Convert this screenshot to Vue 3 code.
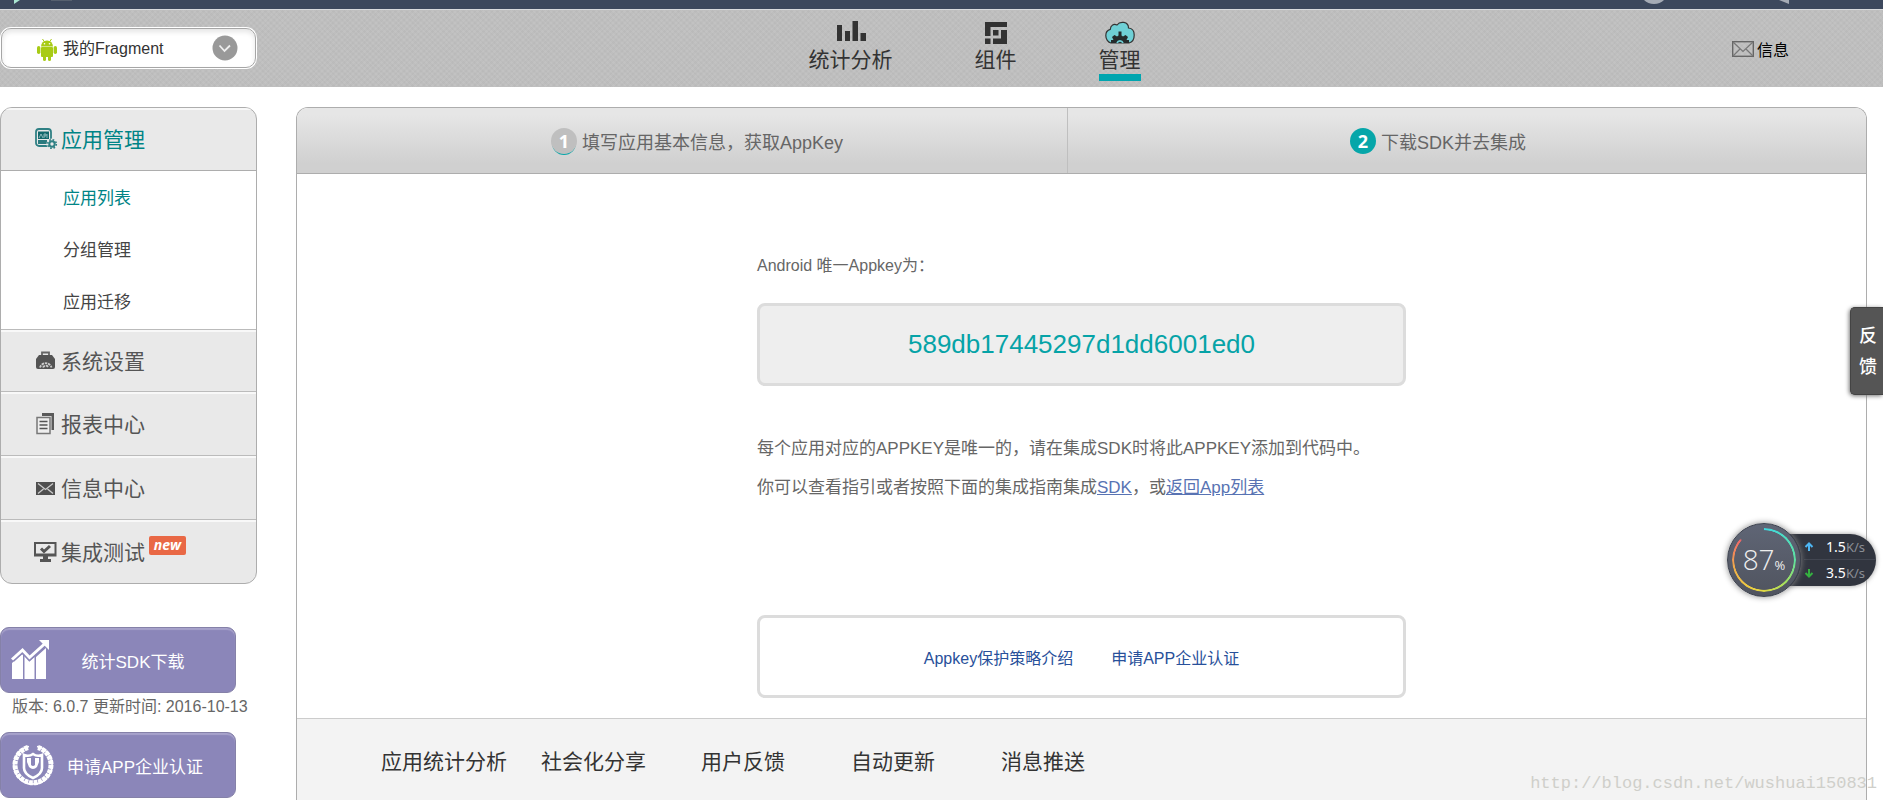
<script setup>
import { ref } from 'vue'

const app = ref('我的Fragment')

const nav = [
  { id: 'stats', label: '统计分析' },
  { id: 'parts', label: '组件' },
  { id: 'manage', label: '管理', active: true }
]

const subItems = [
  { label: '应用列表', active: true },
  { label: '分组管理' },
  { label: '应用迁移' }
]

const sections = [
  { id: 'settings', label: '系统设置' },
  { id: 'reports', label: '报表中心' },
  { id: 'messages', label: '信息中心' },
  { id: 'testing', label: '集成测试', isNew: true }
]

const features = ['应用统计分析', '社会化分享', '用户反馈', '自动更新', '消息推送']
</script>

<template>
  <div class="page">
    <div class="topbar">
      <svg width="80" height="9" viewBox="0 0 80 9" aria-hidden="true">
        <path d="M14 0h6l-6 4z" fill="#a9e6d2" />
        <path d="M51 0h21v1H51z" fill="#56606f" />
      </svg>
      <svg width="150" height="9" viewBox="0 0 150 9" aria-hidden="true">
        <path d="M0 0h20q-4 4-10 4T0 0z" fill="#a5abb5" />
        <path d="M135 0h10v4z" fill="#a5abb5" />
      </svg>
    </div>

    <header class="header">
      <div class="picker">
        <svg class="android" width="22" height="24" viewBox="0 0 22 24" aria-hidden="true">
          <g fill="#a8cb16">
            <path d="M5 8.500a6 6 0 0 1 12 0z" />
            <path d="M6.500 1l2 3M15.500 1l-2 3" stroke="#a8cb16" />
            <rect x="5" y="9" width="12" height="10" rx="1" />
            <rect x="1" y="8" width="3.400" height="8" rx="1.700" />
            <rect x="17.600" y="8" width="3.400" height="8" rx="1.700" />
            <rect x="7" y="17" width="3" height="6" rx="1.500" />
            <rect x="12" y="17" width="3" height="6" rx="1.500" />
          </g>
          <circle cx="8.500" cy="5.800" r=".8" fill="#fff" />
          <circle cx="13.500" cy="5.800" r=".8" fill="#fff" />
        </svg>
        <select v-model="app" aria-label="应用">
          <option>我的Fragment</option>
        </select>
        <svg class="chevron" width="26" height="26" viewBox="0 0 26 26" aria-hidden="true">
          <circle cx="13" cy="13" r="12.500" fill="#999" />
          <path d="M7.500 10.500l5 5.500 5.500-5.500" fill="none" stroke="#eee" stroke-width="1.800" />
        </svg>
      </div>

      <nav class="nav">
        <a v-for="n in nav" :key="n.id" href="#" :class="{ active: n.active }">
          <svg v-if="n.id === 'stats'" width="30" height="24" viewBox="0 0 30 24" aria-hidden="true">
            <path d="M1 4h5v16H1zM9 10h5v10H9zM16.500 0h5.500v20h-5.500zM24.500 12H30v8h-5.500z" fill="#333" />
          </svg>
          <svg v-else-if="n.id === 'parts'" width="22" height="24" viewBox="0 0 22 24" aria-hidden="true">
            <path d="M0 1h22v5H5.500v9H0zM8 9h5.500v5.500H8zM16 9h6v14H8v-5.500h8zM0 17.500h5.500V23H0z" fill="#333" />
          </svg>
          <svg v-else width="30" height="24" viewBox="0 0 30 24" aria-hidden="true">
            <path d="M6 22C3 21.500 .8 18 .8 14.500c0-3 1.800-5.500 4.500-6.200C5.500 4 9 2.500 12 4 15-.3 23.500 .5 23.500 7c4 .3 5.700 3.500 5.700 7 0 4-2 7.300-5.200 8z" fill="#6fd0d6" stroke="#333" stroke-width="1.200" />
            <path d="M6 22v-3h2.500l-1.500-3 2.500-2 2.500 1.500 1.500-1v-4h3v4l1.500 1L20.500 14l2.500 2-1.500 3H24v3z" fill="#252b2c" />
            <path d="M12 22a3.200 3.200 0 0 1 6 0" fill="none" stroke="#6fd0d6" stroke-width="1.600" />
          </svg>
          <span>{{ n.label }}</span>
        </a>
      </nav>

      <a class="inbox" href="#">
        <svg width="22" height="16" viewBox="0 0 22 16" fill="none" stroke="#666" aria-hidden="true">
          <rect x=".7" y=".7" width="20.600" height="14.600" stroke-width="1.400" />
          <path d="M1 1l10 9.500L21 1M1 15l7-7M21 15l-7-7" stroke="#777" stroke-width="1.200" />
        </svg>
        信息
      </a>
    </header>

    <div class="columns">
      <aside class="side">
        <div class="menu">
          <a class="row current" href="#">
            <svg width="24" height="24" viewBox="0 0 24 24" aria-hidden="true">
              <rect x="2" y="3" width="15" height="17" rx="3" fill="none" stroke="#2f8084" stroke-width="1.800" />
              <path d="M4 5.500h11V13H4z" fill="#12686c" />
              <path d="M5 12l2-4 2 4M10 12V8h2v2h-2M13 12V8" fill="none" stroke="#a9cccd" stroke-width=".8" />
              <path d="M4 14h9v4H4z" fill="#2b7a7e" />
              <circle cx="18" cy="18" r="5.500" fill="#e9e9e9" />
              <circle cx="18" cy="18" r="2.700" fill="none" stroke="#2f8084" stroke-width="2" />
              <circle cx="18" cy="18" r="4.300" fill="none" stroke="#2f8084" stroke-width="1.600" stroke-dasharray="1.700 1.680" />
            </svg>
            应用管理
          </a>
          <ul class="sub">
            <li v-for="s in subItems" :key="s.label">
              <a href="#" :class="{ on: s.active }">{{ s.label }}</a>
            </li>
          </ul>
          <a v-for="s in sections" :key="s.id" class="row" href="#">
            <svg width="24" height="24" viewBox="0 0 24 24" aria-hidden="true">
              <template v-if="s.id === 'settings'">
                <path d="M8 8V4.500h7V8" fill="none" stroke="#666" stroke-width="1.800" />
                <path d="M5 7h13l3 4v8q0 2-2 2H4q-2 0-2-2v-8z" fill="#545454" />
                <path d="M6 19.500a6 6 0 0 1 11.500 0M9 19.500a3 3 0 0 1 5.500 0" fill="none" stroke="#ccc" stroke-width="1.800" stroke-dasharray="2.500 .8" />
              </template>
              <template v-else-if="s.id === 'reports'">
                <path d="M8 2h12v17h-2.500V5H8z" fill="#5a5a5a" />
                <path d="M3 6.500h13v16H3z" fill="#eee" stroke="#777" stroke-width="1.500" />
                <path d="M5.500 10.500h8M5.500 14h8M5.500 17.500h8" stroke="#555" stroke-width="1.500" />
              </template>
              <template v-else-if="s.id === 'messages'">
                <path d="M2 7h19v13H2z" fill="#4f4f4f" />
                <path d="M4 8.500l7.500 6 7.500-6M4 18.500l5.500-4.500M19 18.500L13.500 14" fill="none" stroke="#ccc" stroke-width="1.300" />
              </template>
              <template v-else>
                <path d="M0 3h22.500v14.500H0z" fill="#555" />
                <path d="M2 5h18.500v9.500H2z" fill="#e9e9e9" />
                <path d="M7 9.500l3 3 6-5.500" fill="none" stroke="#555" stroke-width="3" />
                <path d="M9 17h5v3h3v3H6v-3h3z" fill="#555" />
              </template>
            </svg>
            {{ s.label }}
            <em v-if="s.isNew" class="new">new</em>
          </a>
        </div>

        <a class="promo" href="#">
          <svg width="40" height="42" viewBox="0 0 40 42" fill="#fff" aria-hidden="true">
            <path d="M1 24l10-9 1 1v24H1zM13.500 17l5 5 5-4v22h-10zM25 18l10-9v31H25z" />
            <path d="M1 20.500L11.500 11l7 7.500L34 4.500" fill="none" stroke="#8b86b9" stroke-width="6" />
            <path d="M1 20.500L11.500 11l7 7.500L34 4.500" fill="none" stroke="#fff" stroke-width="3" />
            <path d="M28 1h10v10z" />
          </svg>
          <span>统计SDK下载</span>
        </a>
        <p class="version">版本: 6.0.7 更新时间: 2016-10-13</p>
        <a class="promo" href="#">
          <svg width="44" height="44" viewBox="0 0 44 44" fill="none" stroke="#fff" aria-hidden="true">
            <path d="M17 4.500A18 18 0 1 0 27 4.500" stroke-width="5" stroke-dasharray="4 .7" />
            <path d="M18 3.500a19 19 0 1 0 8 0" stroke-width="1.500" />
            <path d="M13 12q5 2 9-1 4 3 9 1v13q0 6-9 10-9-4-9-10z" stroke-width="2.600" />
            <path d="M16 15h12v8q0 5-6 7-6-2-6-7z" fill="#8b86b9" stroke="none" />
            <path d="M16 15h4v7q2 2 4 0v-7h4v4l-2 5q-4 4-8 0l-2-5z" fill="#fff" stroke="none" />
          </svg>
          <span>申请APP企业认证</span>
        </a>
      </aside>

      <main class="main">
        <ol class="steps">
          <li><b class="num done">1</b>填写应用基本信息，获取AppKey</li>
          <li><b class="num">2</b>下载SDK并去集成</li>
        </ol>

        <section class="content">
          <p class="label">Android 唯一Appkey为：</p>
          <div class="box key">589db17445297d1dd6001ed0</div>
          <div class="notes">
            <p>每个应用对应的APPKEY是唯一的，请在集成SDK时将此APPKEY添加到代码中。</p>
            <p>你可以查看指引或者按照下面的集成指南集成<a href="#">SDK</a>，或<a href="#">返回App列表</a></p>
          </div>
          <div class="box links">
            <a href="#">Appkey保护策略介绍</a>
            <a href="#">申请APP企业认证</a>
          </div>
        </section>

        <footer class="features">
          <span v-for="f in features" :key="f">{{ f }}</span>
        </footer>
      </main>
    </div>

    <button class="feedback" type="button">反馈</button>

    <div class="monitor">
      <div class="speeds">
        <div class="speed">
          <svg width="10" height="10" viewBox="0 0 10 10" aria-hidden="true"><path d="M5 9V2M1.500 5L5 1.500 8.500 5" fill="none" stroke="#4db5f2" stroke-width="2" /></svg>
          <span>1.5<i>K/s</i></span>
        </div>
        <div class="speed">
          <svg width="10" height="10" viewBox="0 0 10 10" aria-hidden="true"><path d="M5 1v7M1.500 5L5 8.500 8.500 5" fill="none" stroke="#35b040" stroke-width="2" /></svg>
          <span>3.5<i>K/s</i></span>
        </div>
      </div>
      <div class="gauge"><span>87<small>%</small></span></div>
    </div>

    <div class="watermark">http://blog.csdn.net/wushuai150831</div>
  </div>
</template>

<style>
body {
  margin: 0;
  background: #fff;
}
</style>

<style scoped>
.page {
  position: relative;
  display: flex;
  flex-direction: column;
  min-height: 100vh;
  overflow: hidden;
  font-family: "Liberation Sans", "Noto Sans CJK SC", sans-serif;
  font-size: 16px;
  color: #666;
}
a {
  color: inherit;
  text-decoration: none;
}
p,
ul,
ol {
  margin: 0;
  padding: 0;
  list-style: none;
}
svg {
  display: block;
  flex: none;
}

.topbar {
  display: flex;
  justify-content: space-between;
  height: 9px;
  padding-right: 89px;
  background: #3c485d;
  border-bottom: 1px solid #d8dadd;
}

.header {
  display: grid;
  grid-template-columns: minmax(0, 1fr) auto minmax(0, 1fr);
  height: 77px;
  background:
    repeating-linear-gradient(45deg, rgba(0, 0, 0, 0.02) 0 2px, transparent 2px 4px),
    repeating-linear-gradient(-45deg, rgba(0, 0, 0, 0.02) 0 2px, transparent 2px 4px),
    #c2c2c2;
}
.picker {
  position: relative;
  align-self: start;
  width: 255px;
  height: 40px;
  margin: 18px 0 0 1px;
}
.picker select {
  box-sizing: border-box;
  width: 100%;
  height: 100%;
  padding: 0 44px 0 61px;
  appearance: none;
  border: 1px solid #a6a6a6;
  border-radius: 10px;
  background: #fff;
  box-shadow: 0 0 0 1px #fff, inset 0 3px 5px #e6e6e6;
  font: inherit;
  color: #333;
}
.android {
  position: absolute;
  left: 35px;
  top: 10px;
}
.chevron {
  position: absolute;
  right: 18px;
  top: 7px;
  pointer-events: none;
}
.nav {
  display: flex;
  gap: 82px;
  padding-left: 66px;
}
.nav a {
  display: flex;
  flex-direction: column;
  align-items: center;
  padding-top: 11px;
  color: #333;
}
.nav span {
  height: 29px;
  line-height: 29px;
  font-size: 21px;
}
.nav .active span {
  border-bottom: 7px solid #00a5af;
}
.inbox {
  display: flex;
  align-items: center;
  justify-self: end;
  gap: 3px;
  padding-right: 94px;
  color: #000;
}

.columns {
  display: flex;
  flex: 1;
  gap: 39px;
  padding: 20px 16px 0 0;
}
.side {
  flex: none;
  width: 257px;
}
.menu {
  box-sizing: border-box;
  margin-bottom: 43px;
  border: 1px solid #adadad;
  border-radius: 12px;
  overflow: hidden;
  background: #e9e9e9;
}
.row {
  box-sizing: border-box;
  display: flex;
  align-items: center;
  gap: 3px;
  height: 64px;
  padding: 0 0 2px 33px;
  border-top: 1px solid #bbb;
  box-shadow: inset 0 2px 0 #f8f8f8;
  font-size: 21px;
  color: #555;
}
.row.current {
  height: 62px;
  border-top: 0;
  color: #008486;
}
.sub + .row {
  height: 62px;
}
.sub {
  padding: 2px 0 0 62px;
  border-top: 1px solid #adadad;
  background: #fff;
  font-size: 17px;
  line-height: 52px;
  color: #444;
}
.sub .on {
  color: #008486;
}
.new {
  align-self: flex-start;
  width: 37px;
  height: 19px;
  margin: 16px 0 0 1px;
  border-radius: 2px;
  background: #e96845;
  font: italic bold 14px/17px "Open Sans", sans-serif;
  text-align: center;
  color: #fff;
}
.promo {
  box-sizing: border-box;
  display: flex;
  align-items: center;
  width: 236px;
  height: 66px;
  padding: 0 20px 0 10px;
  border: 1px solid #8581a8;
  border-radius: 9px;
  background: #8b86b9;
  box-shadow: inset 0 2px 1px #a7a2cb;
  font-size: 17px;
  color: #fff;
}
.promo span {
  flex: 1;
  text-align: center;
}
.version {
  height: 39px;
  padding-left: 12px;
  line-height: 28px;
  white-space: nowrap;
}

.main {
  display: flex;
  flex: 1;
  flex-direction: column;
  min-width: 0;
  border: 1px solid #adadad;
  border-bottom: 0;
  border-radius: 12px 12px 0 0;
  overflow: hidden;
}
.steps {
  display: grid;
  grid-template-columns: 771fr 798fr;
  height: 65px;
  border-bottom: 1px solid #adadad;
  background: linear-gradient(#e6e6e6 10%, #d0d0d0 85%);
  font-size: 18px;
}
.steps li {
  display: flex;
  align-items: center;
  justify-content: center;
  gap: 5px;
  padding-right: 58px;
}
.steps li:first-child {
  padding: 0 0 0 30px;
  border-right: 1px solid #bfbfbf;
}
.num {
  width: 26px;
  height: 26px;
  border-radius: 50%;
  background: #06a6a9;
  font: bold 18px/26px "Open Sans", sans-serif;
  text-align: center;
  color: #fff;
}
.done {
  background: #bfbfbf;
  box-shadow: 0 2px 0 -1px #06a6a9;
}
.content {
  box-sizing: border-box;
  width: 649px;
  max-width: 100%;
  margin: 0 auto;
  padding: 80px 0 20px;
}
.label {
  height: 49px;
  line-height: 24px;
}
.box {
  box-sizing: border-box;
  display: flex;
  align-items: center;
  justify-content: center;
  height: 83px;
  border: 3px solid #dcdcdc;
  border-radius: 8px;
}
.key {
  background: #eee;
  font-size: 26px;
  color: #06a3a7;
}
.notes {
  padding: 43px 0 108px;
  font-size: 17px;
  line-height: 39px;
  white-space: nowrap;
}
.notes a {
  color: #5873b3;
  text-decoration: underline;
}
.links {
  gap: 38px;
  color: #28509a;
}
.features {
  display: grid;
  flex: 1;
  grid-template-columns: 160px 160px 150px 150px auto;
  min-height: 81px;
  padding-left: 84px;
  border-top: 1px solid #ccc;
  background: #f3f3f3;
  font-size: 21px;
  line-height: 86px;
  color: #333;
}

.feedback {
  position: absolute;
  top: 307px;
  right: 0;
  width: 33px;
  height: 88px;
  padding: 0 6px 2px 8px;
  border: 1px solid #444;
  border-right: 0;
  border-radius: 5px 0 0 5px;
  background: #555;
  box-shadow: -1px 1px 4px #777;
  font: 500 18px/31px "Noto Sans CJK SC", sans-serif;
  color: #fff;
}
.monitor {
  position: absolute;
  top: 523px;
  right: 7px;
  display: flex;
  align-items: center;
  width: 149px;
  height: 74px;
}
.speeds {
  box-sizing: border-box;
  width: 100px;
  height: 52px;
  margin-left: auto;
  padding-left: 28px;
  border-radius: 0 26px 26px 0;
  background: #31353f;
  box-shadow: 0 0 5px #999;
}
.speed {
  display: flex;
  align-items: center;
  justify-content: space-between;
  height: 26px;
  padding-right: 11px;
  font: 14px/26px "Noto Sans", sans-serif;
  color: #fff;
}
.speed + .speed {
  box-shadow: 0 -1px 0 #424651;
}
.speed i {
  font-size: 13px;
  font-style: normal;
  color: #8b8e96;
}
.gauge {
  position: absolute;
  left: 0;
  top: 0;
  box-sizing: border-box;
  width: 74px;
  height: 74px;
  border: 1px solid #3d424e;
  border-radius: 50%;
  background: linear-gradient(#5f6575, #50545f);
  box-shadow: 0 0 6px #888;
  text-align: center;
  font: 300 28px/70px "Open Sans", sans-serif;
  color: #eee;
}
.gauge::before {
  content: "";
  position: absolute;
  inset: 4px;
  border-radius: 50%;
  background: conic-gradient(#3fd8e0, #5fe0a0 25%, #a0e060 37%, #e8d840 52%, #f0b048 70%, #f06868 86%, transparent 87%);
  mask: radial-gradient(closest-side, transparent 92%, #000 94%);
}
.gauge small {
  font-size: 13px;
  font-weight: 400;
}
.watermark {
  position: absolute;
  right: 6px;
  bottom: 10px;
  font: 17px/22px "Liberation Mono", monospace;
  color: #cfcfca;
}
</style>
